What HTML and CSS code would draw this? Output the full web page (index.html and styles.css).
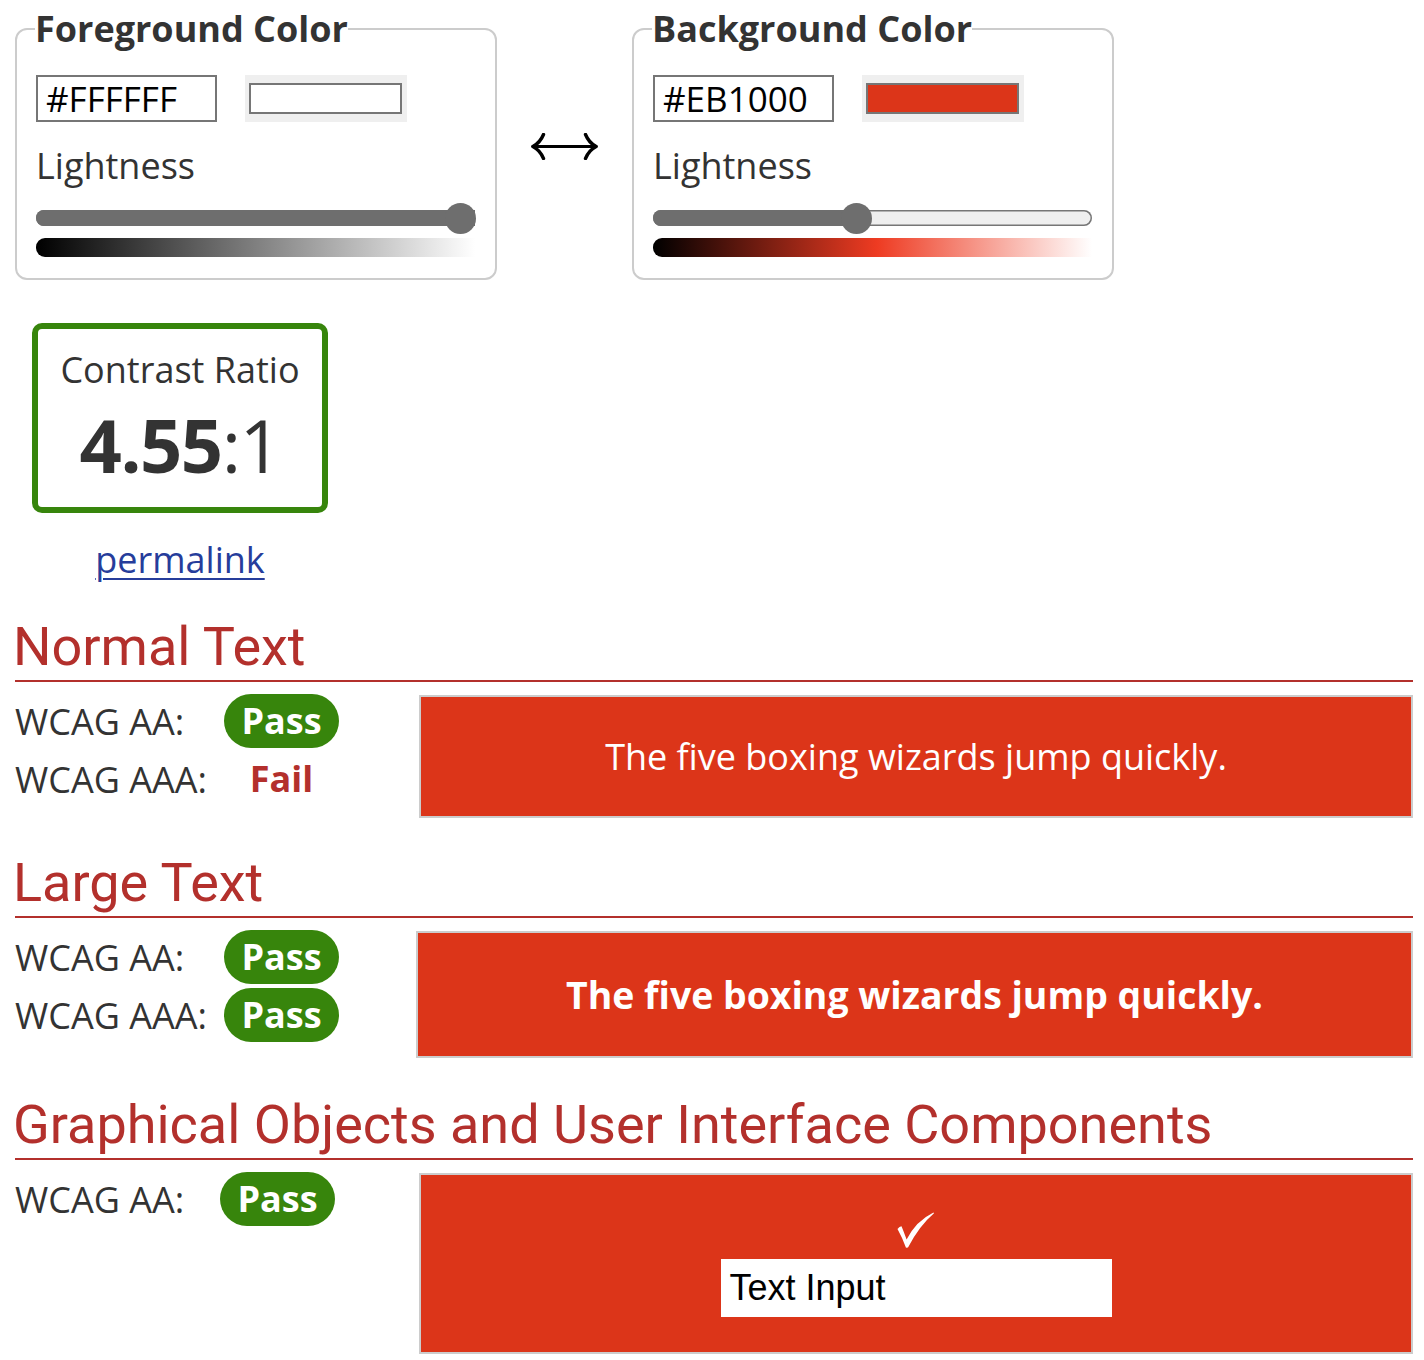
FILE: index.html
```html
<!DOCTYPE html>
<html lang="en">
<head>
<meta charset="utf-8">
<title>Contrast Checker</title>
<link rel="stylesheet" href="styles.css">
</head>
<body>
<div class="page">
  <div class="pickers">
    <fieldset class="picker">
      <legend>Foreground Color</legend>
      <div class="hexrow">
        <div class="hex">#FFFFFF</div>
        <div class="swatch"><div class="swatch-inner swatch-fg"></div></div>
      </div>
      <div class="label">Lightness</div>
      <div class="track">
        <div class="fill" style="width:100%"></div>
        <div class="thumb" style="left:96.6%"></div>
      </div>
      <div class="grad grad-fg"></div>
    </fieldset>
    <div class="swap">
      <svg class="swap-icon" width="67" height="27" viewBox="0 0 67 27" aria-hidden="true">
        <line x1="3" y1="13.5" x2="64" y2="13.5" stroke="#000" stroke-width="3"/>
        <path d="M12.5 1.5 Q9 10 1.8 13.5 Q9 17 12.5 25.5" fill="none" stroke="#000" stroke-width="3.4" stroke-linecap="round" stroke-linejoin="round"/>
        <path d="M54.5 1.5 Q58 10 65.2 13.5 Q58 17 54.5 25.5" fill="none" stroke="#000" stroke-width="3.4" stroke-linecap="round" stroke-linejoin="round"/>
      </svg>
    </div>
    <fieldset class="picker">
      <legend>Background Color</legend>
      <div class="hexrow">
        <div class="hex">#EB1000</div>
        <div class="swatch"><div class="swatch-inner swatch-bg"></div></div>
      </div>
      <div class="label">Lightness</div>
      <div class="track track-partial">
        <div class="fill" style="width:46.3%"></div>
        <div class="thumb" style="left:46.3%"></div>
      </div>
      <div class="grad grad-bg"></div>
    </fieldset>
  </div>

  <div class="ratio-wrap">
    <div class="ratio-box">
      <div class="ratio-title">Contrast Ratio</div>
      <div class="ratio-value"><b>4.55</b>:1</div>
    </div>
    <div class="permalink-row"><a class="permalink" href="#">permalink</a></div>
  </div>

  <h2 class="sec-title sec-first">Normal Text</h2>
  <div class="results">
    <div class="checks">
      <div class="check-row"><div class="check-label">WCAG AA:</div><div class="badge pass">Pass</div></div>
      <div class="check-row"><div class="check-label">WCAG AAA:</div><div class="badge fail">Fail</div></div>
    </div>
    <div class="sample">The five boxing wizards jump quickly.</div>
  </div>

  <h2 class="sec-title">Large Text</h2>
  <div class="results">
    <div class="checks checks-large">
      <div class="check-row"><div class="check-label">WCAG AA:</div><div class="badge pass">Pass</div></div>
      <div class="check-row"><div class="check-label">WCAG AAA:</div><div class="badge pass">Pass</div></div>
    </div>
    <div class="sample sample-large">The five boxing wizards jump quickly.</div>
  </div>

  <h2 class="sec-title sec-last">Graphical Objects and User Interface Components</h2>
  <div class="results">
    <div class="checks">
      <div class="check-row"><div class="check-label check-label-graph">WCAG AA:</div><div class="badge pass">Pass</div></div>
    </div>
    <div class="sample sample-graph">
      <svg class="checkmark" width="37" height="36" viewBox="0 0 37 36" aria-hidden="true">
        <path d="M0.5 17 Q2.5 14.5 4.5 14.2 Q6.5 19 9.6 27.5 Q19 9 36.5 0.5 L37 1.2 Q22 14 11 35.5 L9 35.8 Q5 25 0.5 17 Z" fill="#fff"/>
      </svg>
      <div class="text-input">Text Input</div>
    </div>
  </div>
</div>
</body>
</html>
```

FILE: styles.css
```css
body {
  margin: 0;
  background: #fff;
  color: #333;
  font-family: "Open Sans", "DejaVu Sans", sans-serif;
}

.page {
  padding: 5px 11px 0 15px;
}

/* ---------- colour pickers ---------- */
.pickers {
  display: flex;
  align-items: flex-start;
}

.picker {
  box-sizing: border-box;
  width: 482px;
  min-width: 0;
  margin: 0;
  padding: 22px 20px 21px 19px;
  border: 2px solid #cccccc;
  border-radius: 12px;
}

.picker legend {
  padding: 0;
  margin-left: -1px;
  font-size: 36px;
  font-weight: 700;
  line-height: 48px;
  color: #333;
}

.hexrow {
  display: flex;
}

.hex {
  box-sizing: border-box;
  width: 181px;
  height: 47px;
  padding-left: 8px;
  border: 2px solid #767676;
  font-size: 35px;
  line-height: 43px;
  color: #000;
}

.swatch {
  box-sizing: border-box;
  width: 162px;
  height: 47px;
  margin-left: 28px;
  padding: 8px 5px 8px 4px;
  background: #efefef;
}

.swatch-inner {
  box-sizing: border-box;
  height: 31px;
  border: 2px solid #767676;
}

.swatch-fg { background: #ffffff; }
.swatch-bg { background: #dc3519; }

.label {
  margin-top: 19px;
  font-size: 36px;
  line-height: 49px;
  color: #333;
}

.track {
  position: relative;
  margin-top: 20px;
  height: 16px;
  border-radius: 8px;
  background: #6e6e6e;
}

.track-partial {
  background: #efefef;
  box-shadow: inset 0 0 0 1.5px #767676;
}

.fill {
  height: 100%;
  border-radius: 8px 0 0 8px;
  background: #6e6e6e;
}

.thumb {
  position: absolute;
  top: -7.5px;
  width: 31px;
  height: 31px;
  margin-left: -15.5px;
  border-radius: 50%;
  background: #6e6e6e;
}

.grad {
  margin-top: 12px;
  height: 19px;
  border-radius: 9px 0 0 9px;
}

.grad-fg { background: linear-gradient(to right, #000 0%, #fff 100%); }
.grad-bg { background: linear-gradient(to right, #000 0%, #ee3b22 51%, #fff 100%); }

.swap {
  flex: none;
  width: 135px;
  display: flex;
  justify-content: center;
  padding-top: 128px;
}

.swap-icon { display: block; }

/* ---------- contrast ratio ---------- */
.ratio-wrap {
  width: 296px;
  margin: 43px 0 0 17px;
}

.ratio-box {
  box-sizing: border-box;
  height: 190px;
  padding-top: 16px;
  border: 6px solid #37850c;
  border-radius: 10px;
  text-align: center;
}

.ratio-title {
  font-size: 36px;
  line-height: 49px;
}

.ratio-value {
  margin-top: 15px;
  font-size: 74px;
  line-height: 72px;
  letter-spacing: -1.5px;
}

.ratio-value b { font-weight: 700; }

.permalink-row {
  margin-top: 22px;
  text-align: center;
  font-size: 36px;
  line-height: 49px;
}

.permalink {
  color: #263d9b;
  text-decoration: underline;
  text-decoration-thickness: 2px;
  text-underline-offset: 5px;
}

/* ---------- result sections ---------- */
.sec-title {
  margin: 35px 0 0;
  padding-bottom: 3px;
  border-bottom: 2px solid #b3302c;
  font-family: Roboto, "Liberation Sans", sans-serif;
  font-size: 54px;
  font-weight: 400;
  line-height: 60px;
  color: #b3302c;
  text-indent: -2px;
}

.sec-first { margin-top: 33px; }
.sec-last { margin-top: 37px; }

.results {
  display: flex;
  align-items: flex-start;
  margin-top: 12px;
}

.checks {
  flex: none;
  width: 404px;
  display: flex;
  flex-direction: column;
  gap: 4px;
}

.checks-large { width: 401px; }

.check-row {
  display: flex;
  align-items: center;
  height: 54px;
}

.check-label {
  width: 209px;
  font-size: 36px;
  line-height: 49px;
  color: #333;
}

.check-label-graph { width: 205px; }

.badge {
  box-sizing: border-box;
  width: 115px;
  height: 54px;
  border-radius: 27px;
  text-align: center;
  font-size: 36px;
  font-weight: 700;
  line-height: 54px;
}

.pass {
  background: #37850c;
  color: #fff;
}

.fail {
  color: #b3302c;
}

.sample {
  flex: 1;
  margin-top: 1px;
  padding: 35px 0;
  border: 2px solid #cccccc;
  background: #dc3519;
  color: #fff;
  text-align: center;
  font-size: 36px;
  line-height: 49px;
}

.sample-large {
  padding: 37px 0;
  font-size: 37.4px;
  font-weight: 700;
}

.sample-graph {
  display: flex;
  flex-direction: column;
  align-items: center;
  padding: 37px 0 35px;
}

.checkmark {
  display: block;
  margin-left: -1px;
}

.text-input {
  box-sizing: border-box;
  width: 391px;
  height: 58px;
  margin-top: 11px;
  padding-left: 9px;
  background: #fff;
  color: #000;
  text-align: left;
  font-family: "Liberation Sans", Arial, sans-serif;
  font-size: 36px;
  line-height: 58px;
}
```
